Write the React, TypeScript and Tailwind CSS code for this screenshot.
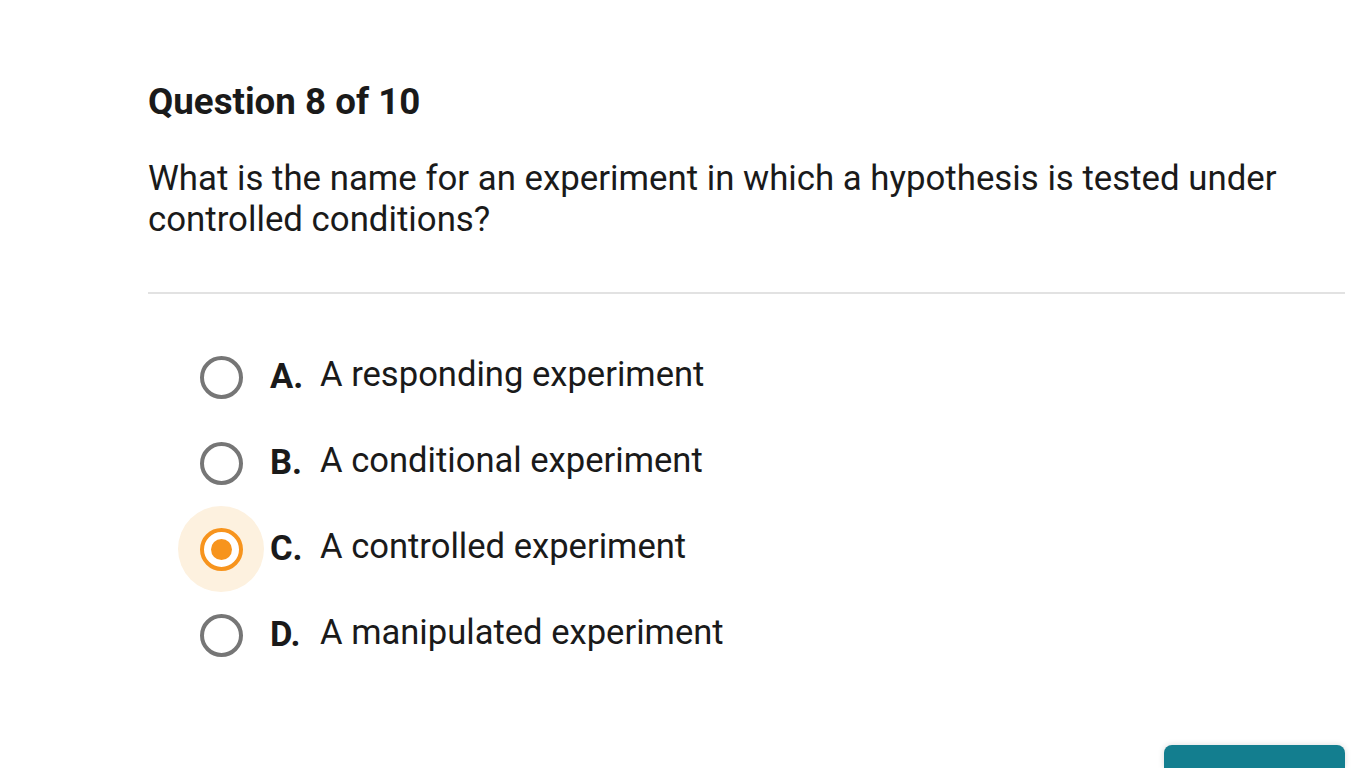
const options = [
  { key: "A.", text: "A responding experiment" },
  { key: "B.", text: "A conditional experiment" },
  { key: "C.", text: "A controlled experiment", selected: true },
  { key: "D.", text: "A manipulated experiment" },
];

function Radio({ selected }: { selected?: boolean }) {
  return (
    <div
      className={
        "flex h-[86px] w-[86px] shrink-0 items-center justify-center rounded-full " +
        (selected ? "bg-[#fdf1df]" : "")
      }
    >
      {selected ? (
        <div className="flex h-[43px] w-[43px] items-center justify-center rounded-full border-[4px] border-[#f7941d] bg-white">
          <div className="h-[21px] w-[21px] rounded-full bg-[#f7941d]" />
        </div>
      ) : (
        <div className="h-[43px] w-[43px] rounded-full border-[4px] border-[#767676] bg-white" />
      )}
    </div>
  );
}

export default function App() {
  return (
    <div className="flex h-screen flex-col overflow-hidden bg-white pl-[148px] pr-[21px] pt-[79px] font-['Roboto',sans-serif] text-[#1a1a1a]">
      <h1 className="text-[36.7px] font-bold leading-[46px]">Question 8 of 10</h1>

      <p className="mt-[33px] text-[34.8px] leading-[41px]">
        What is the name for an experiment in which a hypothesis is tested under controlled conditions?
      </p>

      <div className="mt-[52px] h-[2px] bg-[#e2e2e2]" />

      <div className="mt-[40px] flex flex-col pl-[30px]">
        {options.map((o) => (
          <div key={o.key} className="flex h-[86px] items-center">
            <Radio selected={o.selected} />
            <span className="ml-[6px] w-[50px] text-[34.6px] font-bold">{o.key}</span>
            <span className="-mt-[4px] text-[34.6px]">{o.text}</span>
          </div>
        ))}
      </div>

      <div className="mt-auto flex justify-end">
        <button className="h-[23px] w-[181px] rounded-t-[8px] bg-[#137e8f] shadow-[0_0_6px_rgba(0,0,0,0.15)]" />
      </div>
    </div>
  );
}
